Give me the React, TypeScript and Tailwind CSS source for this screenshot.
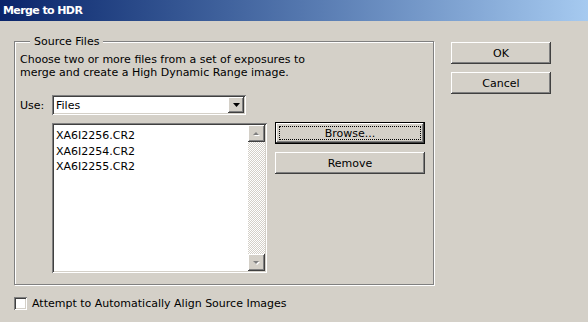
import React from 'react';

const raised =
  'shadow-[inset_-1px_-1px_#404040,inset_1px_1px_#ffffff,inset_-2px_-2px_#808080,inset_2px_2px_#d4d0c8]';
const sunken =
  'shadow-[inset_1px_1px_#808080,inset_-1px_-1px_#ffffff,inset_2px_2px_#404040,inset_-2px_-2px_#d4d0c8]';

const Button = ({ label, width, focused }: { label: string; width: string; focused?: boolean }) => (
  <div className={`${width} h-[22px] bg-[#d4d0c8] ${focused ? 'border border-black' : ''}`}>
    <div className={`w-full h-full ${raised} flex items-center justify-center p-[3px]`}>
      <div
        className={`w-full h-full flex items-center justify-center ${
          focused ? 'border border-dotted border-black' : ''
        }`}
      >
        {label}
      </div>
    </div>
  </div>
);

const ArrowButton = ({ dir }: { dir: 'up' | 'down' }) => (
  <div className={`w-[17px] h-[17px] bg-[#d4d0c8] ${raised} flex items-center justify-center`}>
    <svg width="9" height="6" viewBox="0 0 9 6">
      {dir === 'up' ? (
        <>
          <path d="M2 5h6L5 2z" fill="#ffffff" />
          <path d="M1 4h6L4 1z" fill="#808080" />
        </>
      ) : (
        <>
          <path d="M2 2h6L5 5z" fill="#ffffff" />
          <path d="M1 1h6L4 4z" fill="#808080" />
        </>
      )}
    </svg>
  </div>
);

export default function App() {
  const files = ['XA6I2256.CR2', 'XA6I2254.CR2', 'XA6I2255.CR2'];

  return (
    <div
      className="w-[588px] h-[322px] bg-[#d4d0c8] text-black text-[11px] leading-[13px] overflow-hidden"
      style={{ fontFamily: '"DejaVu Sans", Verdana, sans-serif' }}
    >
      {/* Title bar */}
      <div className="h-[21px] bg-gradient-to-r from-[#0a246a] to-[#a6caf0] flex items-center pl-[3px] text-white font-bold text-[11px] tracking-[-0.6px]">
        Merge to HDR
      </div>

      <div className="flex pl-[14px]">
        <div className="w-[421px]">
          {/* Source Files group */}
          <fieldset className="mt-[14px] w-[420px] h-[250px] border border-[#808080] shadow-[inset_1px_1px_#ffffff,1px_1px_#ffffff] pl-[5px]">
            <legend className="ml-[10px] px-[4px] bg-[#d4d0c8]">Source Files</legend>
            <div className="pt-[5px]">
              Choose two or more files from a set of exposures to
              <br />
              merge and create a High Dynamic Range image.
            </div>

            <div className="flex items-center mt-[16px]">
              <span className="w-[32px]">Use:</span>
              <div className={`w-[194px] h-[20px] bg-white ${sunken} flex items-center justify-between p-[2px] pl-[4px]`}>
                <span>Files</span>
                <div className={`w-[16px] h-[16px] bg-[#d4d0c8] ${raised} flex items-center justify-center`}>
                  <svg width="7" height="4" viewBox="0 0 7 4">
                    <path d="M0 0h7L3.5 4z" fill="#000000" />
                  </svg>
                </div>
              </div>
            </div>

            <div className="flex mt-[8px] pl-[32px]">
              <div className={`w-[215px] h-[150px] bg-white ${sunken} flex p-[2px]`}>
                <div className="flex-1 pl-[2px] pt-[3px] leading-[15.5px]">
                  {files.map((f) => (
                    <div key={f}>{f}</div>
                  ))}
                </div>
                <div className="w-[17px] flex flex-col bg-[repeating-conic-gradient(#ffffff_0_25%,#d4d0c8_0_50%)] bg-[length:2px_2px]">
                  <ArrowButton dir="up" />
                  <div className="flex-1" />
                  <ArrowButton dir="down" />
                </div>
              </div>

              <div className="flex flex-col gap-[8px] ml-[8px] -mt-[1px]">
                <Button label="Browse..." width="w-[150px]" focused />
                <Button label="Remove" width="w-[150px]" />
              </div>
            </div>
          </fieldset>

          {/* Align checkbox */}
          <div className="flex items-center mt-[12px]">
            <div className={`w-[13px] h-[13px] bg-white ${sunken}`} />
            <span className="ml-[5px]">Attempt to Automatically Align Source Images</span>
          </div>
        </div>

        {/* Dialog buttons */}
        <div className="flex flex-col gap-[8px] ml-[16px] mt-[21px]">
          <Button label="OK" width="w-[100px]" />
          <Button label="Cancel" width="w-[100px]" />
        </div>
      </div>
    </div>
  );
}
